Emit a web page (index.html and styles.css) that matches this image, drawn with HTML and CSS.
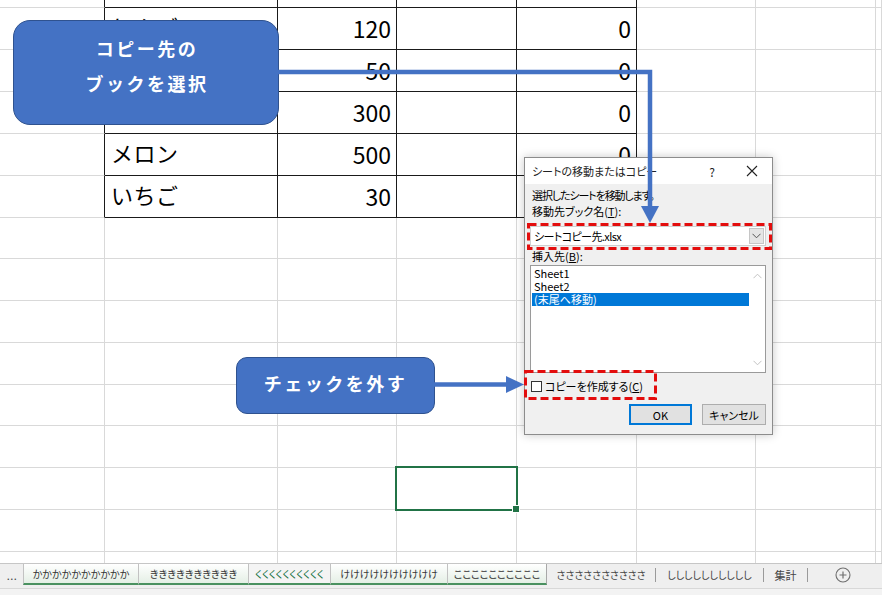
FILE: index.html
```html
<!DOCTYPE html>
<html lang="ja">
<head>
<meta charset="utf-8">
<title>シートの移動またはコピー</title>
<link rel="stylesheet" href="styles.css">
</head>
<body>
<div class="app">
  <div class="sheet">
    <div class="c ta"></div><div class="c tb"></div><div class="c tb"></div><div class="c tb"></div><div class="c tb"></div><div class="c"></div><div class="c"></div><div class="c"></div>
    <div class="c ta"></div><div class="c tb txt">りんご</div><div class="c tb num">120</div><div class="c tb"></div><div class="c tb num">0</div><div class="c"></div><div class="c"></div><div class="c"></div>
    <div class="c ta"></div><div class="c tb txt">みかん</div><div class="c tb num">50</div><div class="c tb"></div><div class="c tb num">0</div><div class="c"></div><div class="c"></div><div class="c"></div>
    <div class="c ta"></div><div class="c tb txt">バナナ</div><div class="c tb num">300</div><div class="c tb"></div><div class="c tb num">0</div><div class="c"></div><div class="c"></div><div class="c"></div>
    <div class="c ta"></div><div class="c tb txt">メロン</div><div class="c tb num">500</div><div class="c tb"></div><div class="c tb num">0</div><div class="c"></div><div class="c"></div><div class="c"></div>
    <div class="c ta"></div><div class="c tb txt">いちご</div><div class="c tb num">30</div><div class="c tb"></div><div class="c tb num">0</div><div class="c"></div><div class="c"></div><div class="c"></div>
    <div class="c"></div><div class="c"></div><div class="c"></div><div class="c"></div><div class="c"></div><div class="c"></div><div class="c"></div><div class="c"></div>
    <div class="c"></div><div class="c"></div><div class="c"></div><div class="c"></div><div class="c"></div><div class="c"></div><div class="c"></div><div class="c"></div>
    <div class="c"></div><div class="c"></div><div class="c"></div><div class="c"></div><div class="c"></div><div class="c"></div><div class="c"></div><div class="c"></div>
    <div class="c"></div><div class="c"></div><div class="c"></div><div class="c"></div><div class="c"></div><div class="c"></div><div class="c"></div><div class="c"></div>
    <div class="c"></div><div class="c"></div><div class="c"></div><div class="c"></div><div class="c"></div><div class="c"></div><div class="c"></div><div class="c"></div>
    <div class="c"></div><div class="c"></div><div class="c"></div><div class="c"></div><div class="c"></div><div class="c"></div><div class="c"></div><div class="c"></div>
    <div class="c"></div><div class="c"></div><div class="c"></div><div class="c sel"></div><div class="c"></div><div class="c"></div><div class="c"></div><div class="c"></div>
    <div class="c"></div><div class="c"></div><div class="c"></div><div class="c"></div><div class="c"></div><div class="c"></div><div class="c"></div><div class="c"></div>
    <div class="c last"></div><div class="c last"></div><div class="c last"></div><div class="c last"></div><div class="c last"></div><div class="c last"></div><div class="c last"></div><div class="c last"></div>
  </div>
  <div class="tabbar">
    <span class="tab-more">...</span>
    <span class="tab grouped t1">かかかかかかかかかか</span>
    <span class="tab grouped t2">きききききききききき</span>
    <span class="tab active t3">くくくくくくくくくく</span>
    <span class="tab grouped t4">けけけけけけけけけけ</span>
    <span class="tab grouped t5">ここここここここここ</span>
    <span class="tab plain t6">ささささささささささ</span>
    <span class="tab-sep"></span>
    <span class="tab plain t7">しししししししししし</span>
    <span class="tab-sep"></span>
    <span class="tab plain t8">集計</span>
    <span class="tab-sep"></span>
    <span class="tab-add">
      <svg width="16" height="16" viewBox="0 0 16 16"><circle cx="8" cy="8" r="7" fill="none" stroke="#6f6f6f" stroke-width="1.1"/><path d="M8 4.5v7M4.5 8h7" stroke="#6f6f6f" stroke-width="1.2"/></svg>
    </span>
  </div>
  <div class="status"></div>
</div>

<div class="callout callout-book">
  <span>コピー先の</span>
  <span>ブックを選択</span>
</div>
<div class="callout callout-check">
  <span>チェックを外す</span>
</div>

<div class="dialog">
  <div class="dlg-title">
    <span class="dlg-caption">シートの移動またはコピー</span>
    <span class="dlg-btn">?</span>
    <span class="dlg-btn dlg-close">
      <svg width="12" height="12" viewBox="0 0 12 12"><path d="M1 1L11 11M11 1L1 11" stroke="#222" stroke-width="1.1"/></svg>
    </span>
  </div>
  <div class="dlg-body">
    <div class="dlg-line dlg-lead">選択したシートを移動します。</div>
    <div class="dlg-line">移動先ブック名(<u>T</u>):</div>
    <div class="combo">
      <span class="combo-text">シートコピー先.xlsx</span>
      <span class="combo-btn">
        <svg width="9" height="6" viewBox="0 0 9 6"><path d="M0.5 0.8L4.5 4.8L8.5 0.8" fill="none" stroke="#555" stroke-width="1"/></svg>
      </span>
    </div>
    <div class="dlg-line">挿入先(<u>B</u>):</div>
    <div class="listbox">
      <div class="list-items">
        <div class="item">Sheet1</div>
        <div class="item">Sheet2</div>
        <div class="item selected">(末尾へ移動)</div>
      </div>
      <div class="vscroll">
        <svg width="9" height="6" viewBox="0 0 9 6"><path d="M0.5 5.2L4.5 1.2L8.5 5.2" fill="none" stroke="#c2c2c2" stroke-width="1"/></svg>
        <svg width="9" height="6" viewBox="0 0 9 6"><path d="M0.5 0.8L4.5 4.8L8.5 0.8" fill="none" stroke="#c2c2c2" stroke-width="1"/></svg>
      </div>
    </div>
    <label class="check-row">
      <span class="checkbox"></span>
      <span>コピーを作成する(<u>C</u>)</span>
    </label>
    <div class="dlg-actions">
      <span class="button default">OK</span>
      <span class="button">キャンセル</span>
    </div>
  </div>
</div>

<svg class="annotations" width="882" height="595" viewBox="0 0 882 595">
  <rect x="528.5" y="224.5" width="242" height="24" fill="none" stroke="#e30d0d" stroke-width="3" stroke-dasharray="8 4"/>
  <rect x="525.5" y="371.5" width="130" height="27" fill="none" stroke="#e30d0d" stroke-width="3" stroke-dasharray="8 4"/>
  <polyline points="278,72 650,72 650,208" fill="none" stroke="#4472c4" stroke-width="4.5"/>
  <polygon points="641,206 659,206 650,223" fill="#4472c4"/>
  <line x1="434" y1="384.5" x2="508" y2="384.5" stroke="#4472c4" stroke-width="4.5"/>
  <polygon points="506,376 524,384.5 506,393" fill="#4472c4"/>
</svg>
</body>
</html>
```

FILE: styles.css
```css
* { box-sizing: border-box; }
html, body {
  margin: 0;
  padding: 0;
  width: 882px;
  height: 595px;
  overflow: hidden;
  background: #ffffff;
  font-family: "Noto Sans CJK JP", "Noto Sans", sans-serif;
  color: #000;
}
.app {
  display: flex;
  flex-direction: column;
  width: 882px;
  height: 595px;
}
.sheet {
  display: grid;
  grid-template-columns: 105px 173px 119px 120px 120px 119px 120px 1fr;
  grid-template-rows: 8px 42px 42px 42px 42px 42px 41px 42px 42px 42px 41px 42px 42px 42px 1fr;
  height: 563px;
  background: #fff;
}
.c {
  border-right: 1px solid #d9d9d9;
  border-bottom: 1px solid #d9d9d9;
  display: flex;
  align-items: center;
  line-height: 1;
  white-space: nowrap;
  overflow: hidden;
}
.c.last { border-bottom: none; }
.c.ta { border-right-color: #1a1a1a; }
.c.tb { border-right-color: #1a1a1a; border-bottom-color: #1a1a1a; }
.txt { padding-left: 6px; padding-bottom: 5px; font-size: 22px; letter-spacing: 0.5px; }
.num { justify-content: flex-end; padding-right: 5px; font-size: 23px; }
.sel { position: relative; overflow: visible; }
.sel::after {
  content: "";
  position: absolute;
  left: -2px; top: -2px; right: -2px; bottom: -2px;
  border: 2px solid #217346;
}
.sel::before {
  content: "";
  position: absolute;
  right: -4px; bottom: -4px;
  width: 6px; height: 6px;
  background: #217346;
  border: 1px solid #fff;
  z-index: 1;
}

/* sheet tabs */
.tabbar {
  height: 25px;
  display: flex;
  align-items: flex-start;
  background: #efefef;
  border-top: 1px solid #c6c6c6;
  font-size: 10px;
  font-feature-settings: "palt";
  color: #333;
}
.tab-more {
  width: 23px;
  height: 21px;
  display: flex;
  align-items: center;
  justify-content: center;
  font-size: 11px;
  color: #444;
  letter-spacing: 0.5px;
  padding-left: 1px;
}
.tab {
  height: 21px;
  display: flex;
  align-items: center;
  justify-content: center;
  white-space: nowrap;
}
.grouped {
  background: linear-gradient(#ffffff, #e4efe5);
  border-left: 1px solid #c2c2c2;
  border-bottom: 2px solid #4a9160;
}
.t1 { width: 115px; }
.t2 { width: 110px; }
.t3 { width: 82px; }
.t4 { width: 117px; }
.t5 { width: 100px; border-right: 1px solid #a8a8a8; }
.t6 { width: 108px; }
.t7 { width: 107px; }
.t8 { width: 43px; font-size: 11px; }
.active {
  color: #217346;
  background: #f4f4f4;
  border-left: 1px solid #c2c2c2;
  border-bottom: 2px solid #4a9160;
}
.plain { color: #444; }
.tab-sep {
  width: 1px;
  height: 14px;
  margin-top: 4px;
  background: #9a9a9a;
}
.tab-add {
  margin-left: 27px;
  height: 22px;
  display: flex;
  align-items: center;
}
.status {
  flex: 1;
  background: #f3f3f3;
  border-top: 1px solid #d8d8d8;
}

/* callouts */
.callout {
  position: absolute;
  display: flex;
  flex-direction: column;
  align-items: center;
  justify-content: center;
  background: #4472c4;
  border: 1px solid #2f528f;
  color: #fff;
  font-weight: 700;
  font-size: 18px;
  letter-spacing: 2.5px;
  line-height: 35px;
}
.callout-book {
  left: 13px; top: 20px;
  width: 266px; height: 105px;
  border-radius: 17px;
  padding-bottom: 13px;
  padding-left: 2px;
}
.callout-check {
  left: 236px; top: 357px;
  width: 199px; height: 57px;
  border-radius: 11px;
  padding-bottom: 5px;
}

/* dialog */
.dialog {
  position: absolute;
  left: 524px; top: 157px;
  width: 249px; height: 278px;
  background: #f0f0f0;
  border: 1px solid #8c8c8c;
  box-shadow: 0 0 9px rgba(0,0,0,0.22);
  font-size: 11px;
  font-feature-settings: "palt";
  display: flex;
  flex-direction: column;
}
.dlg-title {
  height: 26px;
  background: #fff;
  display: flex;
  align-items: center;
  flex-shrink: 0;
}
.dlg-caption {
  flex: 1;
  padding-left: 7px;
  font-size: 11px;
  color: #222;
}
.dlg-btn {
  width: 40px;
  height: 26px;
  display: flex;
  align-items: center;
  justify-content: center;
  font-size: 12px;
  color: #222;
}
.dlg-body {
  flex: 1;
  padding: 3px 6px 0 5px;
  display: flex;
  flex-direction: column;
}
.dlg-line {
  height: 16px;
  line-height: 16px;
  white-space: nowrap;
  padding-left: 2px;
}
.dlg-lead { letter-spacing: -1.1px; }
.combo {
  margin-top: 7px;
  height: 20px;
  background: #fff;
  border: 1px solid #d0d0d0;
  display: flex;
  align-items: center;
  justify-content: space-between;
  margin-bottom: 2px;
}
.combo-text { padding-left: 3px; font-size: 11px; letter-spacing: -0.6px; }
.combo-btn {
  width: 15px;
  height: 16px;
  margin-right: 1px;
  background: #e5e5e5;
  border: 1px solid #c6c6c6;
  display: flex;
  align-items: center;
  justify-content: center;
}
.listbox {
  margin-top: 1px;
  height: 108px;
  background: #fff;
  border: 1px solid #9a9a9a;
  display: flex;
}
.list-items {
  flex: 1;
  padding: 1px 0 0 1px;
}
.item {
  height: 13px;
  line-height: 13px;
  padding-left: 2px;
  font-size: 11px;
}
.item.selected {
  background: #0078d7;
  color: #fff;
}
.vscroll {
  width: 16px;
  display: flex;
  flex-direction: column;
  justify-content: space-between;
  align-items: center;
  padding: 7px 0 6px;
}
.check-row {
  margin-top: 5px;
  height: 16px;
  display: flex;
  align-items: center;
  gap: 3px;
  padding-left: 1px;
}
.checkbox {
  width: 11px;
  height: 11px;
  border: 1px solid #333;
  background: #fff;
}
.dlg-actions {
  margin-top: 10px;
  display: flex;
  justify-content: flex-end;
  gap: 10px;
}
.button {
  width: 64px;
  height: 21px;
  display: flex;
  align-items: center;
  justify-content: center;
  background: #e1e1e1;
  border: 1px solid #adadad;
  font-size: 11px;
}
.button.default {
  width: 63px;
  border: 2px solid #0078d7;
}

.annotations {
  position: absolute;
  left: 0; top: 0;
  pointer-events: none;
}
```
